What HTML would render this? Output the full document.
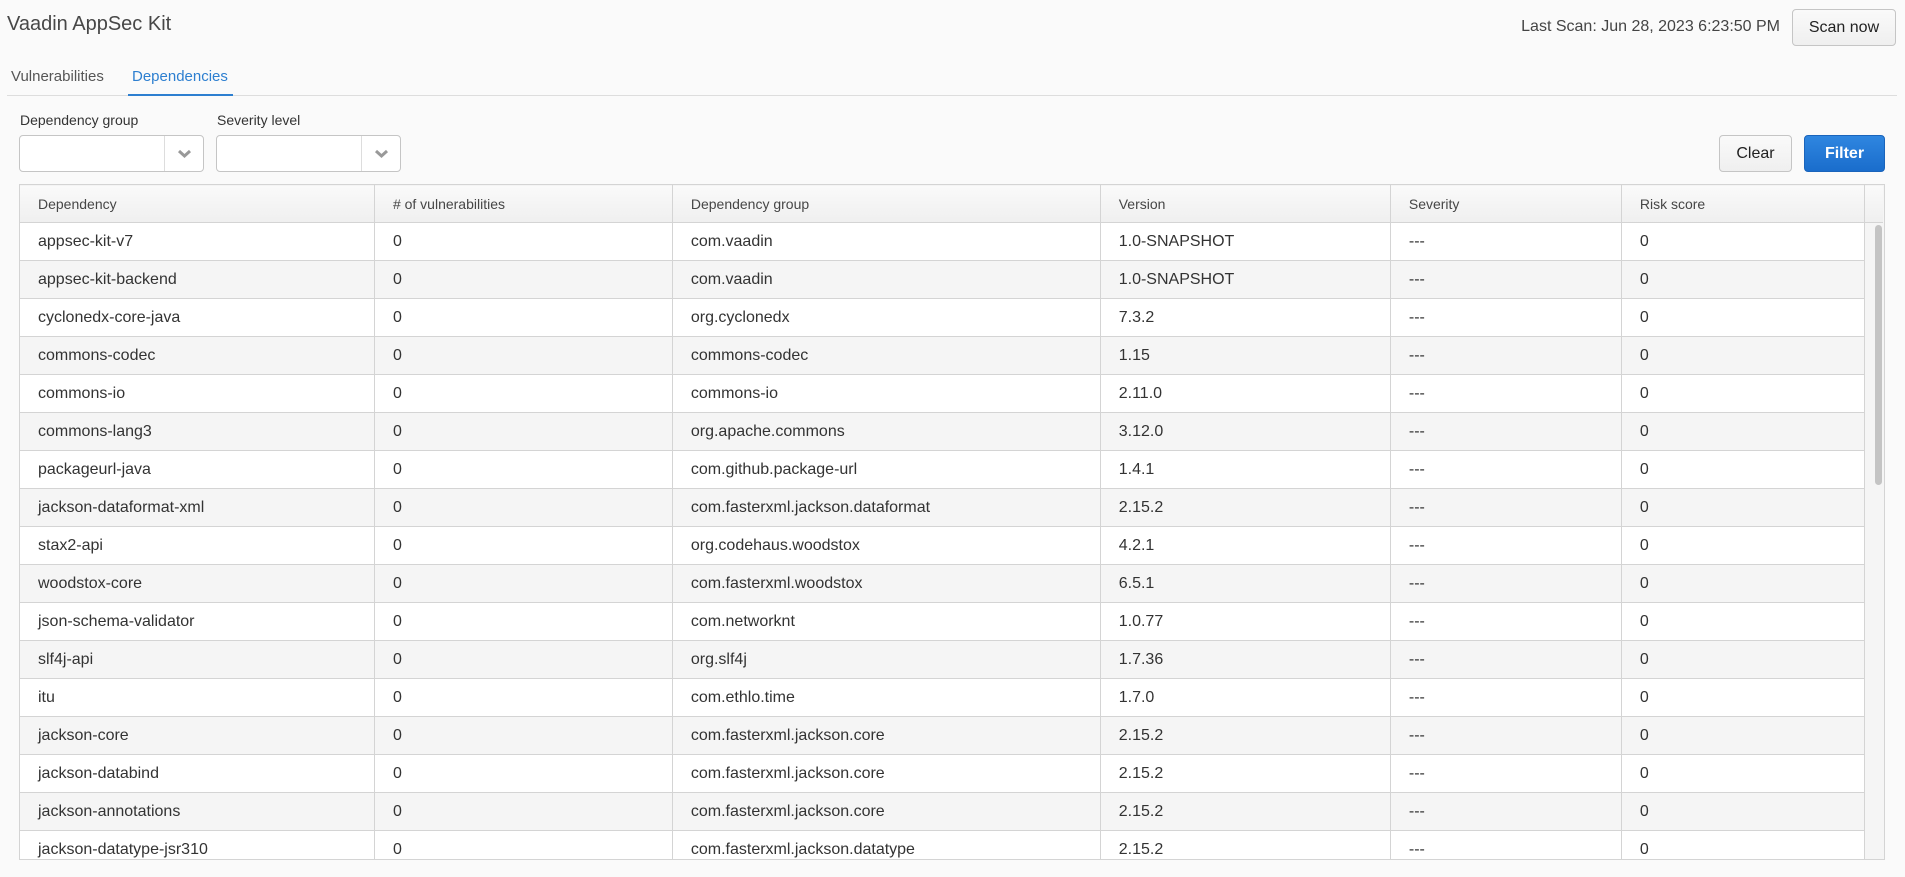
<!DOCTYPE html>
<html><head><meta charset="utf-8"><style>
*{box-sizing:border-box;margin:0;padding:0}
body{width:1905px;height:877px;background:#fafafa;font-family:"Liberation Sans",sans-serif;color:#333;position:relative;overflow:hidden}
.abs{position:absolute}
.title{left:7px;top:13px;font-size:20px;color:#474747}
.tab{top:68px;font-size:15px}
.combo{top:135px;width:185px;height:37px;border:1px solid #c5c5c5;border-radius:4px;background:#fff}
.combo .arr{position:absolute;right:0;top:0;width:39px;height:35px;border-left:1px solid #ddd}
.lbl{top:112px;font-size:14px;color:#333}
.btn{height:37px;border:1px solid #c5c5c5;border-radius:4px;background:linear-gradient(#fafafa,#efefef);font-size:16px;text-align:center;line-height:35px;color:#222}
table{position:absolute;left:19px;top:184px;border-collapse:collapse;table-layout:fixed;font-size:16px}
td,th{border:1px solid #d4d4d4;height:38px;padding-left:18px;text-align:left;white-space:nowrap;overflow:hidden}
th{font-weight:normal;font-size:14px;color:#464646;background:linear-gradient(#fafafa,#efefef)}
tr:nth-child(odd) td{background:#f5f5f5}
td{background:#fff}
</style></head><body>
<div class="abs title">Vaadin AppSec Kit</div>
<div class="abs" style="right:125px;top:18px;font-size:16px;color:#444;white-space:nowrap">Last Scan: Jun 28, 2023 6:23:50 PM</div>
<div class="abs btn" style="left:1792px;top:9px;width:104px">Scan now</div>
<div class="abs tab" style="left:11px;color:#555">Vulnerabilities</div>
<div class="abs tab" style="left:132px;color:#2d7fd0">Dependencies</div>
<div class="abs" style="left:7px;top:95px;width:1890px;height:1px;background:#ddd"></div>
<div class="abs" style="left:128px;top:94px;width:105px;height:2px;background:#2d7fd0"></div>
<div class="abs lbl" style="left:20px">Dependency group</div>
<div class="abs lbl" style="left:217px">Severity level</div>
<div class="abs combo" style="left:19px"><div class="arr"><svg width="39" height="35"><path d="M14 15l5.5 5 5.5-5" stroke="#999" stroke-width="3" fill="none"/></svg></div></div>
<div class="abs combo" style="left:216px"><div class="arr"><svg width="39" height="35"><path d="M14 15l5.5 5 5.5-5" stroke="#999" stroke-width="3" fill="none"/></svg></div></div>
<div class="abs btn" style="left:1719px;top:135px;width:73px">Clear</div>
<div class="abs btn" style="left:1804px;top:135px;width:81px;background:linear-gradient(#2f86e0,#1a6dcc);border-color:#1a64bb;color:#fff;font-weight:bold">Filter</div>
<div class="abs" style="left:19px;top:184px;width:1866px;height:676px;overflow:hidden;border:1px solid #d4d4d4;background:#f5f5f5">
<table style="left:-1px;top:-1px">
<colgroup><col style="width:358px"><col style="width:301px"><col style="width:431px"><col style="width:293px"><col style="width:234px"><col style="width:246px"><col style="width:12px"></colgroup>
<tr><th>Dependency</th><th># of vulnerabilities</th><th>Dependency group</th><th>Version</th><th>Severity</th><th>Risk score</th><th style="border-right:none"></th></tr>
<tr><td>appsec-kit-v7</td><td>0</td><td>com.vaadin</td><td>1.0-SNAPSHOT</td><td>---</td><td>0</td></tr>
<tr><td>appsec-kit-backend</td><td>0</td><td>com.vaadin</td><td>1.0-SNAPSHOT</td><td>---</td><td>0</td></tr>
<tr><td>cyclonedx-core-java</td><td>0</td><td>org.cyclonedx</td><td>7.3.2</td><td>---</td><td>0</td></tr>
<tr><td>commons-codec</td><td>0</td><td>commons-codec</td><td>1.15</td><td>---</td><td>0</td></tr>
<tr><td>commons-io</td><td>0</td><td>commons-io</td><td>2.11.0</td><td>---</td><td>0</td></tr>
<tr><td>commons-lang3</td><td>0</td><td>org.apache.commons</td><td>3.12.0</td><td>---</td><td>0</td></tr>
<tr><td>packageurl-java</td><td>0</td><td>com.github.package-url</td><td>1.4.1</td><td>---</td><td>0</td></tr>
<tr><td>jackson-dataformat-xml</td><td>0</td><td>com.fasterxml.jackson.dataformat</td><td>2.15.2</td><td>---</td><td>0</td></tr>
<tr><td>stax2-api</td><td>0</td><td>org.codehaus.woodstox</td><td>4.2.1</td><td>---</td><td>0</td></tr>
<tr><td>woodstox-core</td><td>0</td><td>com.fasterxml.woodstox</td><td>6.5.1</td><td>---</td><td>0</td></tr>
<tr><td>json-schema-validator</td><td>0</td><td>com.networknt</td><td>1.0.77</td><td>---</td><td>0</td></tr>
<tr><td>slf4j-api</td><td>0</td><td>org.slf4j</td><td>1.7.36</td><td>---</td><td>0</td></tr>
<tr><td>itu</td><td>0</td><td>com.ethlo.time</td><td>1.7.0</td><td>---</td><td>0</td></tr>
<tr><td>jackson-core</td><td>0</td><td>com.fasterxml.jackson.core</td><td>2.15.2</td><td>---</td><td>0</td></tr>
<tr><td>jackson-databind</td><td>0</td><td>com.fasterxml.jackson.core</td><td>2.15.2</td><td>---</td><td>0</td></tr>
<tr><td>jackson-annotations</td><td>0</td><td>com.fasterxml.jackson.core</td><td>2.15.2</td><td>---</td><td>0</td></tr>
<tr><td>jackson-datatype-jsr310</td><td>0</td><td>com.fasterxml.jackson.datatype</td><td>2.15.2</td><td>---</td><td>0</td></tr>
</table>
<div class="abs" style="left:1855px;top:40px;width:7px;height:260px;border-radius:4px;background:#c4c4c4"></div>
</div>
</body></html>
